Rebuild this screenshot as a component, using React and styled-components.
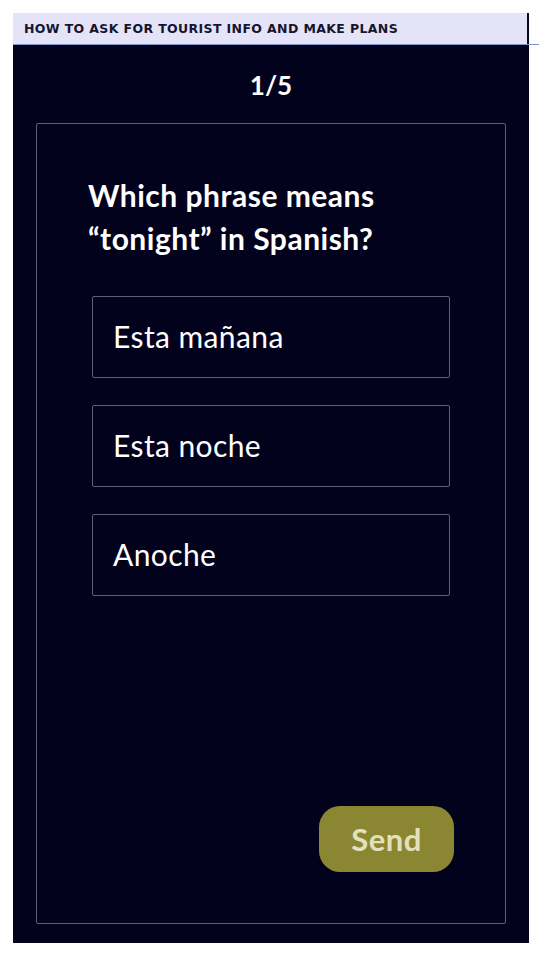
import styled, { createGlobalStyle } from 'styled-components';

const GlobalStyle = createGlobalStyle`
  html, body {
    margin: 0;
    padding: 0;
    background: #ffffff;
  }
  body {
    padding: 13px;
    font-family: Lato, "Noto Sans", sans-serif;
  }
`;

const Frame = styled.div`
  width: 516px;
  display: flex;
  flex-direction: column;
`;

const TopBar = styled.div`
  position: relative;
  height: 31px;
  background: #e5e3f8;
  border-right: 2px solid #0a0820;
  display: flex;
  align-items: center;
  padding-left: 11px;
  box-sizing: border-box;
  width: 516px;

  /* thin blue rule under the bar, runs off to the right edge */
  &::after {
    content: '';
    position: absolute;
    left: 0;
    right: -12px;
    bottom: -1px;
    height: 1px;
    background: #7e9ad0;
  }
`;

const TopTitle = styled.span`
  font-family: "DejaVu Sans", "Liberation Sans", sans-serif;
  font-weight: 700;
  font-size: 12.5px;
  letter-spacing: 0.37px;
  color: #17152e;
  text-transform: uppercase;
`;

const Panel = styled.main`
  background: #03021c;
  height: 899px;
  padding: 0 23px 19px 23px;
  box-sizing: border-box;
  display: flex;
  flex-direction: column;
`;

const Counter = styled.div`
  height: 79px;
  display: flex;
  align-items: center;
  justify-content: center;
  padding-top: 2px;
  box-sizing: border-box;
  color: #ffffff;
  font-weight: 700;
  font-size: 26px;
`;

const Card = styled.section`
  flex: 1;
  border: 1px solid #5f5d78;
  border-radius: 2px;
  display: flex;
  flex-direction: column;
  padding: 50px 51px 51px 51px;
`;

const Question = styled.h2`
  margin: 0;
  color: #ffffff;
  font-weight: 700;
  font-size: 30px;
  letter-spacing: 0.5px;
  line-height: 43px;
`;

const Options = styled.div`
  display: flex;
  flex-direction: column;
  gap: 27px;
  margin: 36px 4px 0 4px;
`;

const Option = styled.button`
  height: 82px;
  background: transparent;
  border: 1px solid #5f5d78;
  border-radius: 2px;
  color: #ffffff;
  font-family: Lato, "Noto Sans", sans-serif;
  font-size: 30px;
  letter-spacing: 0.4px;
  font-weight: 400;
  text-align: left;
  padding: 0 0 2px 20px;
  cursor: pointer;
`;

const Footer = styled.div`
  margin-top: auto;
  display: flex;
  justify-content: flex-end;
`;

const SendButton = styled.button`
  width: 135px;
  height: 66px;
  border: none;
  border-radius: 21px;
  background: #8a8632;
  color: #e3e1bb;
  font-family: Lato, "Noto Sans", sans-serif;
  font-weight: 700;
  font-size: 31px;
  letter-spacing: 0.5px;
  cursor: pointer;
`;

const choices = ['Esta mañana', 'Esta noche', 'Anoche'];

export default function App() {
  return (
    <>
      <GlobalStyle />
      <Frame>
        <TopBar>
          <TopTitle>How to ask for tourist info and make plans</TopTitle>
        </TopBar>
        <Panel>
          <Counter>1/5</Counter>
          <Card>
            <Question>
              Which phrase means
              <br />
              “tonight” in Spanish?
            </Question>
            <Options>
              {choices.map(c => (
                <Option key={c}>{c}</Option>
              ))}
            </Options>
            <Footer>
              <SendButton>Send</SendButton>
            </Footer>
          </Card>
        </Panel>
      </Frame>
    </>
  );
}
